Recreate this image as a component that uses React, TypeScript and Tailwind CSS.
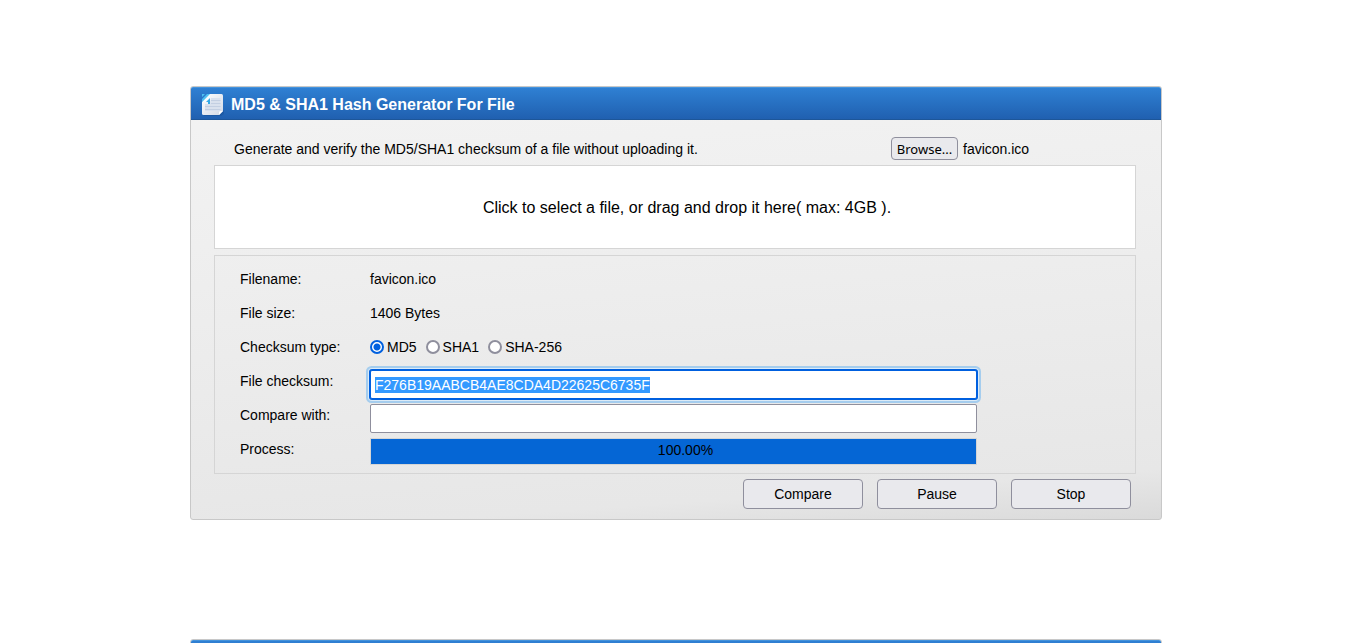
import { useEffect, useRef, useState } from "react";
import type { ReactNode } from "react";

const HASH = "F276B19AABCB4AE8CDA4D22625C6735F";
const TYPES = ["MD5", "SHA1", "SHA-256"];

function DocumentIcon() {
  return (
    <svg width="24" height="24" viewBox="0 0 24 24" aria-hidden="true">
      <defs>
        <linearGradient id="sheet" x1="0" y1="0" x2="1" y2="1">
          <stop offset="0" stopColor="#ffffff" />
          <stop offset="1" stopColor="#d3dae6" />
        </linearGradient>
      </defs>
      <path d="M2 21h17l4-4v4l-3 2H3z" fill="#174f96" opacity="0.5" />
      <path d="M8 1h12.500q1.500 0 1.500 1.500V18l-4 4H2.500Q1 22 1 20.500V9z" fill="url(#sheet)" />
      <path d="M10 5h9.500v13H4v-7h5z" fill="#d9e1ee" />
      <path d="M10 7.500h9.500M10 10.500h9.500M4 13.500h15.500M4 16.500h15.500" stroke="#c3cfe2" />
      <path d="M22 18l-4 4v-2.500q0-1.500 1.500-1.500z" fill="#ffffff" />
      <path d="M1 9l8-8v5q0 3-3 3z" fill="#f8fcff" />
      <path d="M1 1h3L1 4zM6 1h3L1 9V6z" fill="#4fc0f0" />
      <path d="M9 5v6H7V9H5z" fill="#37a9e6" />
    </svg>
  );
}

function PanelHeader({ children }: { children?: ReactNode }) {
  return (
    <header className="flex h-[33px] items-center gap-[6px] rounded-t-[2px] border-t border-b border-t-[#4493dc] border-b-[#1d5699] bg-linear-to-b from-[#2f80d3] to-[#2060b0] pt-[2px] pl-[10px]">
      {children}
    </header>
  );
}

function Row({ label, htmlFor, children }: { label: string; htmlFor?: string; children: ReactNode }) {
  return (
    <div className="flex h-[34px]">
      <label htmlFor={htmlFor} className="w-[130px] shrink-0 leading-[34px]">
        {label}
      </label>
      <div className="min-w-0 flex-1">{children}</div>
    </div>
  );
}

export default function App() {
  const [type, setType] = useState("MD5");
  const [compare, setCompare] = useState("");
  const checksum = useRef<HTMLInputElement>(null);
  const picker = useRef<HTMLInputElement>(null);

  useEffect(() => {
    checksum.current?.focus();
    checksum.current?.select();
  }, []);

  const pick = () => picker.current?.click();

  return (
    <div className="h-screen overflow-hidden bg-white pt-[86px] pl-[3px] font-['Liberation_Sans',Arial,sans-serif] text-sm text-black">
      <main className="mx-auto flex max-w-[972px] flex-col gap-[119px]">
        <section className="rounded-[3px] border border-[#c8c8c8] bg-[linear-gradient(176deg,#f3f3f3_0%,#eeeeee_40%,#e7e7e7_90%,#dadada_100%)]">
          <PanelHeader>
            <DocumentIcon />
            <h1 className="text-base font-bold text-white">MD5 &amp; SHA1 Hash Generator For File</h1>
          </PanelHeader>
          <div className="pr-[25px] pb-[10px] pl-[23px]">
            <div className="flex h-[45px] items-center justify-between pt-[17px] pb-[5px] pl-5">
              <p>Generate and verify the MD5/SHA1 checksum of a file without uploading it.</p>
              <div className="flex w-[245px] items-center gap-[5px]">
                <input ref={picker} type="file" aria-label="File" className="hidden" />
                <button
                  type="button"
                  onClick={pick}
                  className="h-[23px] w-[67px] rounded-[4px] border border-[#8f8f9d] bg-[#e9e9ed] font-['Noto_Sans',sans-serif] text-[13px] leading-5"
                >
                  Browse...
                </button>
                <span>favicon.ico</span>
              </div>
            </div>
            <button
              type="button"
              onClick={pick}
              className="block h-[84px] w-full border border-[#d5d5d5] bg-white pt-[2px] pl-6 text-base"
            >
              Click to select a file, or drag and drop it here( max: 4GB ).
            </button>
            <div className="mt-1.5 border border-[#d5d5d5] px-[25px] pt-1.5 pb-[7px]">
              <Row label="Filename:">
                <span className="leading-[34px]">favicon.ico</span>
              </Row>
              <Row label="File size:">
                <span className="leading-[34px]">1406 Bytes</span>
              </Row>
              <Row label="Checksum type:">
                <div className="flex h-full items-center gap-[9px]">
                  {TYPES.map((name) => (
                    <label key={name} className="flex items-center gap-[3px]">
                      <input
                        type="radio"
                        name="checksum-type"
                        checked={type === name}
                        onChange={() => setType(name)}
                        className="size-[14px] appearance-none rounded-full border-2 border-[#8f8f9d] bg-white checked:border-[#0060df] checked:bg-[radial-gradient(circle,#0060df_3px,#fff_4px)]"
                      />
                      {name}
                    </label>
                  ))}
                </div>
              </Row>
              <Row label="File checksum:" htmlFor="checksum">
                <div className="pt-1.5">
                  <input
                    id="checksum"
                    ref={checksum}
                    readOnly
                    value={HASH}
                    className="block h-[29px] w-full max-w-[607px] rounded-[2px] border border-[#8f8f9d] bg-white px-1 outline-none selection:bg-[#3399ff] selection:text-white focus:border-[#0060df] focus:shadow-[0_0_0_1px_#0060df,0_0_0_2px_#dcebf8,0_0_0_4px_#a5cdee]"
                  />
                </div>
              </Row>
              <Row label="Compare with:" htmlFor="compare">
                <div className="pt-1.5">
                  <input
                    id="compare"
                    value={compare}
                    onChange={(e) => setCompare(e.target.value)}
                    className="block h-[29px] w-full max-w-[607px] rounded-[2px] border border-[#8f8f9d] bg-white px-1 outline-none"
                  />
                </div>
              </Row>
              <Row label="Process:">
                <div className="pt-1.5">
                  <div
                    role="progressbar"
                    aria-label="Process"
                    aria-valuenow={100}
                    className="h-[27px] w-full max-w-[607px] border border-[#d5d5d5] bg-[#0566d5] pl-6 text-center leading-[22px]"
                  >
                    100.00%
                  </div>
                </div>
              </Row>
            </div>
            <div className="flex justify-end gap-[14px] pt-[5px] pr-[5px]">
              {["Compare", "Pause", "Stop"].map((name) => (
                <button
                  key={name}
                  type="button"
                  className="h-[30px] w-[120px] rounded-[4px] border border-[#8f8f9d] bg-[#e9e9ed]"
                >
                  {name}
                </button>
              ))}
            </div>
          </div>
        </section>
        <section className="rounded-[3px] border border-[#c8c8c8]">
          <PanelHeader />
        </section>
      </main>
    </div>
  );
}
